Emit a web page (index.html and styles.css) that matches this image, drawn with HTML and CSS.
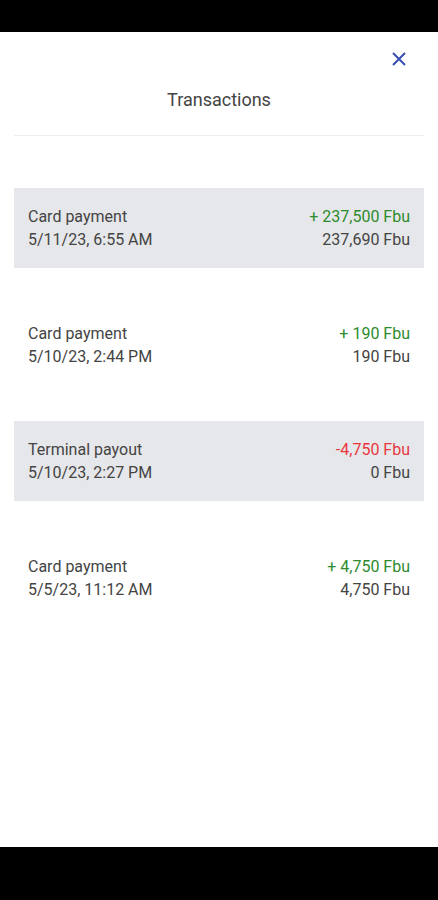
FILE: index.html
```
<!DOCTYPE html>
<html lang="en">

<head>
    <meta charset="UTF-8">
    <meta name="viewport" content="width=device-width, initial-scale=1.0">
    <title>Transactions</title>
    <link rel="stylesheet" href="styles.css">
</head>

<body>
    <div class="status-bar"></div>

    <div class="screen">
        <div class="toolbar">
            <button class="close-btn" aria-label="Close">
                <svg width="14" height="14" viewBox="0 0 14 14">
                    <path d="M1 1 L13 13 M13 1 L1 13" stroke="currentColor" stroke-width="2" fill="none" />
                </svg>
            </button>
        </div>

        <h1 class="title">Transactions</h1>
        <div class="divider"></div>

        <ul class="tx-list">
            <li class="tx-item shaded">
                <div class="tx-info">
                    <span class="tx-name">Card payment</span>
                    <span class="tx-date">5/11/23, 6:55 AM</span>
                </div>
                <div class="tx-amounts">
                    <span class="tx-amount credit">+ 237,500 Fbu</span>
                    <span class="tx-balance">237,690 Fbu</span>
                </div>
            </li>
            <li class="tx-item">
                <div class="tx-info">
                    <span class="tx-name">Card payment</span>
                    <span class="tx-date">5/10/23, 2:44 PM</span>
                </div>
                <div class="tx-amounts">
                    <span class="tx-amount credit">+ 190 Fbu</span>
                    <span class="tx-balance">190 Fbu</span>
                </div>
            </li>
            <li class="tx-item shaded">
                <div class="tx-info">
                    <span class="tx-name">Terminal payout</span>
                    <span class="tx-date">5/10/23, 2:27 PM</span>
                </div>
                <div class="tx-amounts">
                    <span class="tx-amount debit">-4,750 Fbu</span>
                    <span class="tx-balance">0 Fbu</span>
                </div>
            </li>
            <li class="tx-item">
                <div class="tx-info">
                    <span class="tx-name">Card payment</span>
                    <span class="tx-date">5/5/23, 11:12 AM</span>
                </div>
                <div class="tx-amounts">
                    <span class="tx-amount credit">+ 4,750 Fbu</span>
                    <span class="tx-balance">4,750 Fbu</span>
                </div>
            </li>
        </ul>
    </div>

    <div class="nav-bar"></div>
</body>

</html>
```

FILE: styles.css
```
:root {
    --text: #444;
    --row: #e6e7ea;
    --credit: #2e8b2e;
    --debit: #e8383d;
    --accent: #3a4db3;
}

body {
    font-family: Roboto, 'Noto Sans', sans-serif;
    color: var(--text);
    margin: 0;
    width: 438px;
    height: 900px;
    display: flex;
    flex-direction: column;
    background-color: #fff;
}

.status-bar {
    height: 32px;
    background-color: #000;
    flex-shrink: 0;
}

.nav-bar {
    height: 53px;
    background-color: #000;
    flex-shrink: 0;
}

.screen {
    flex: 1;
    display: flex;
    flex-direction: column;
}

.toolbar {
    height: 53px;
    display: flex;
    justify-content: flex-end;
    align-items: center;
    padding-right: 32px;
}

.close-btn {
    background: none;
    border: none;
    padding: 0;
    width: 14px;
    height: 14px;
    color: var(--accent);
    cursor: pointer;
    display: flex;
}

.title {
    margin: 0;
    font-size: 18px;
    font-weight: 400;
    line-height: 30px;
    text-align: center;
    padding-bottom: 20px;
}

.divider {
    height: 1px;
    background-color: #eee;
    margin: 0 14px;
}

.tx-list {
    list-style-type: none;
    margin: 52px 14px 0;
    padding: 0;
    display: flex;
    flex-direction: column;
    gap: 36.5px;
}

.tx-item {
    height: 80px;
    padding: 0 14px;
    display: flex;
    justify-content: space-between;
    align-items: center;
    font-size: 16px;
    line-height: 23px;
}

.tx-item.shaded {
    background-color: var(--row);
}

.tx-info,
.tx-amounts {
    display: flex;
    flex-direction: column;
}

.tx-amounts {
    align-items: flex-end;
}

.credit {
    color: var(--credit);
}

.debit {
    color: var(--debit);
}
```
